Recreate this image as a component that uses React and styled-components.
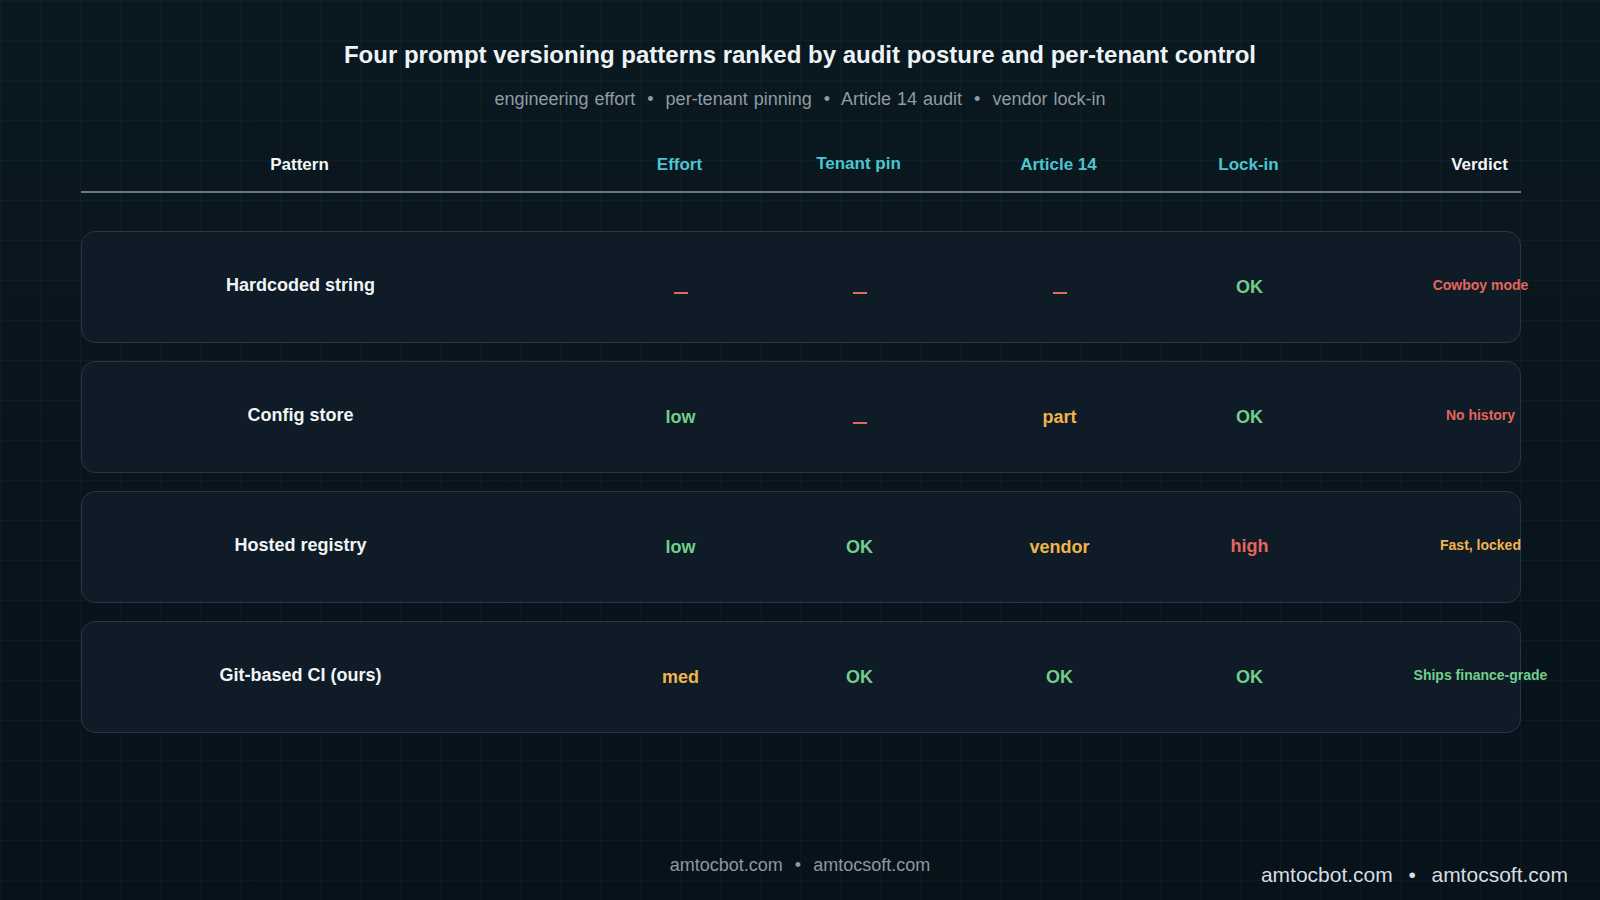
import React from "react";
import styled, { createGlobalStyle } from "styled-components";

const Global = createGlobalStyle`
  html, body { margin: 0; padding: 0; }
  body {
    width: 1600px; height: 900px; overflow: hidden;
    font-family: "Liberation Sans", Arial, sans-serif;
    background: #08141b;
  }
`;

const Page = styled.div`
  position: relative;
  width: 1600px; height: 900px; box-sizing: border-box;
  background-color: #08131a;
  background-image:
    linear-gradient(rgba(40,70,80,0.14) 1px, transparent 1px),
    linear-gradient(90deg, rgba(40,70,80,0.14) 1px, transparent 1px),
    linear-gradient(180deg, #0a1820 0%, #07121a 100%);
  background-size: 40px 40px, 40px 40px, 100% 100%;
  display: flex; flex-direction: column; align-items: center;
  padding-top: 41px;
`;

const Title = styled.h1`
  margin: 0; font-size: 24px; font-weight: 700; color: #eef4f6; line-height: 28px;
`;
const Sub = styled.div`
  margin-top: 20px; font-size: 18px; color: #8f9ca4; line-height: 20px;
  word-spacing: 1px;
`;

const COLS = "438px 81px 160px 19px 160px 40px 160px 30px 160px 71px 160px";
const POS = [1, 3, 5, 7, 9, 11];

const Table = styled.div`
  width: 1440px; margin-top: 36px; margin-left: 1px;
`;
const Header = styled.div`
  display: grid; grid-template-columns: ${COLS};
  align-items: center; height: 40px;
  border-bottom: 2px solid #6b7a82;
  padding-bottom: 6px;
`;
const HeadCell = styled.div`
  grid-column: ${p => POS[p.$i]};
  text-align: center; font-size: 17px; font-weight: 700;
  color: ${p => (p.$accent ? "#4cc6cf" : "#f2f6f7")};
  white-space: nowrap;
  margin-top: ${p => (p.$up ? "-3px" : "0")};
`;
const Rows = styled.div`
  display: flex; flex-direction: column; gap: 18px; margin-top: 38px;
`;
const Row = styled.div`
  display: grid; grid-template-columns: ${COLS};
  align-items: center; height: 112px; box-sizing: border-box;
  background: #0f1b27; border: 1px solid #253645; border-radius: 14px;
`;
const Cell = styled.div`
  grid-column: ${p => POS[p.$i]};
  text-align: center; white-space: nowrap;
  font-size: ${p => (p.$small ? "14px" : "18px")};
  font-weight: 700;
  color: ${p => p.$c};
  margin-top: ${p => p.$dy || 0}px;
`;
const Dash = styled.span`
  display: inline-block; width: 14px; height: 2px; background: currentColor;
  vertical-align: middle;
`;
const Footer = styled.div`
  margin-top: auto; margin-bottom: 24px; font-size: 18px; color: #8d989f;
  word-spacing: 1px;
`;
const Watermark = styled.div`
  position: absolute; right: 32px; bottom: 13px;
  font-size: 21px; color: #d6dde0; word-spacing: 2px;
`;

const C = { w: "#f1f5f6", r: "#e2675b", g: "#72cf8b", y: "#f0b54a" };
const data = [
  ["Hardcoded string", ["–", "r"], ["–", "r"], ["–", "r"], ["OK", "g"], ["Cowboy mode", "r"]],
  ["Config store", ["low", "g"], ["–", "r"], ["part", "y"], ["OK", "g"], ["No history", "r"]],
  ["Hosted registry", ["low", "g"], ["OK", "g"], ["vendor", "y"], ["high", "r"], ["Fast, locked", "y"]],
  ["Git-based CI (ours)", ["med", "y"], ["OK", "g"], ["OK", "g"], ["OK", "g"], ["Ships finance-grade", "g"]],
];

export default function App() {
  return (
    <Page>
      <Global />
      <Title>Four prompt versioning patterns ranked by audit posture and per-tenant control</Title>
      <Sub>engineering effort &nbsp;•&nbsp; per-tenant pinning &nbsp;•&nbsp; Article 14 audit &nbsp;•&nbsp; vendor lock-in</Sub>
      <Table>
        <Header>
          <HeadCell $i={0}>Pattern</HeadCell>
          <HeadCell $i={1} $accent>Effort</HeadCell>
          <HeadCell $i={2} $accent $up>Tenant pin</HeadCell>
          <HeadCell $i={3} $accent>Article 14</HeadCell>
          <HeadCell $i={4} $accent>Lock-in</HeadCell>
          <HeadCell $i={5}>Verdict</HeadCell>
        </Header>
        <Rows>
          {data.map((r) => (
            <Row key={r[0]}>
              <Cell $i={0} $c={C.w} $dy={-4}>{r[0]}</Cell>
              {r.slice(1, 5).map(([t, k], j) => (
                <Cell key={j} $i={j + 1} $c={C[k]} $dy={t === "–" ? 10 : t === "high" ? -2 : 0}>
                  {t === "–" ? <Dash aria-label="–" /> : t}
                </Cell>
              ))}
              <Cell $i={5} $small $c={C[r[5][1]]} $dy={-4}>{r[5][0]}</Cell>
            </Row>
          ))}
        </Rows>
      </Table>
      <Footer>amtocbot.com &nbsp;•&nbsp; amtocsoft.com</Footer>
      <Watermark>amtocbot.com &nbsp;•&nbsp; amtocsoft.com</Watermark>
    </Page>
  );
}
